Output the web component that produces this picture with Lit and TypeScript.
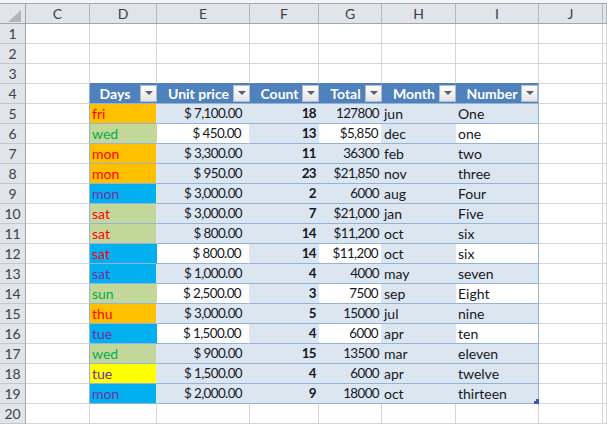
import { LitElement, html, css, nothing, TemplateResult } from 'lit';
import { customElement } from 'lit/decorators.js';

interface Row {
  day: string;
  fill: 'orange' | 'green' | 'blue' | 'yellow';
  ink: 'red' | 'lime' | 'purple';
  price: string;
  count: number;
  total: string;
  month: string;
  num: string;
  white?: boolean;
}

const COLUMNS = ['C', 'D', 'E', 'F', 'G', 'H', 'I', 'J'];
const HEADERS = ['Days', 'Unit price', 'Count', 'Total', 'Month', 'Number'];

const ROWS: Row[] = [
  { day: 'fri', fill: 'orange', ink: 'red', price: '$ 7,100.00', count: 18, total: '127800', month: 'jun', num: 'One' },
  { day: 'wed', fill: 'green', ink: 'lime', price: '$ 450.00', count: 13, total: '$5,850', month: 'dec', num: 'one', white: true },
  { day: 'mon', fill: 'orange', ink: 'red', price: '$ 3,300.00', count: 11, total: '36300', month: 'feb', num: 'two' },
  { day: 'mon', fill: 'orange', ink: 'red', price: '$ 950.00', count: 23, total: '$21,850', month: 'nov', num: 'three' },
  { day: 'mon', fill: 'blue', ink: 'purple', price: '$ 3,000.00', count: 2, total: '6000', month: 'aug', num: 'Four' },
  { day: 'sat', fill: 'green', ink: 'red', price: '$ 3,000.00', count: 7, total: '$21,000', month: 'jan', num: 'Five' },
  { day: 'sat', fill: 'green', ink: 'red', price: '$ 800.00', count: 14, total: '$11,200', month: 'oct', num: 'six' },
  { day: 'sat', fill: 'blue', ink: 'red', price: '$ 800.00', count: 14, total: '$11,200', month: 'oct', num: 'six', white: true },
  { day: 'sat', fill: 'blue', ink: 'purple', price: '$ 1,000.00', count: 4, total: '4000', month: 'may', num: 'seven' },
  { day: 'sun', fill: 'green', ink: 'lime', price: '$ 2,500.00', count: 3, total: '7500', month: 'sep', num: 'Eight', white: true },
  { day: 'thu', fill: 'orange', ink: 'red', price: '$ 3,000.00', count: 5, total: '15000', month: 'jul', num: 'nine' },
  { day: 'tue', fill: 'blue', ink: 'purple', price: '$ 1,500.00', count: 4, total: '6000', month: 'apr', num: 'ten', white: true },
  { day: 'wed', fill: 'green', ink: 'lime', price: '$ 900.00', count: 15, total: '13500', month: 'mar', num: 'eleven' },
  { day: 'tue', fill: 'yellow', ink: 'purple', price: '$ 1,500.00', count: 4, total: '6000', month: 'apr', num: 'twelve' },
  { day: 'mon', fill: 'blue', ink: 'purple', price: '$ 2,000.00', count: 9, total: '18000', month: 'oct', num: 'thirteen' },
];

@customElement('app-root')
export class AppRoot extends LitElement {
  static styles = css`
    :host {
      display: block;
      width: 607px;
      height: 424px;
      overflow: hidden;
      background: #fff;
      font-family: 'Lato', 'Liberation Sans', sans-serif;
      font-size: 14px;
      color: #14181f;
    }

    .top {
      height: 3px;
      background: #f4f5f7;
      border-bottom: 1px solid #a3a6ab;
    }

    .sheet {
      display: grid;
      grid-template-columns: 26px 64px 67px 93px 69px 63px 74px 83px 64px 1fr;
      grid-auto-rows: 20px;
    }

    .sheet > div {
      box-sizing: border-box;
      display: flex;
      align-items: center;
      white-space: nowrap;
      line-height: 1;
      border-right: 1px solid #d6d6d6;
      border-bottom: 1px solid #d6d6d6;
    }

    .sheet > .corner {
      position: relative;
      background: #e1e4e9;
      border-right: 1px solid #a3a6ab;
      border-bottom: 1px solid #a3a6ab;
    }

    .corner::after {
      content: '';
      position: absolute;
      left: 8px;
      top: 6px;
      width: 13px;
      height: 12px;
      background: #b1b6bb;
      clip-path: polygon(100% 0, 100% 100%, 0 100%);
    }

    .sheet > .col {
      justify-content: center;
      background: #e1e4e9;
      color: #3d4248;
      border-right-color: #b4b7bc;
      border-bottom-color: #a3a6ab;
    }

    .sheet > .row {
      justify-content: center;
      background: #e1e4e9;
      color: #3d4248;
      border-right-color: #a3a6ab;
      border-bottom-color: #c3c6cb;
    }

    .sheet > .before-table {
      border-right-color: #95b3d7;
    }

    .sheet > .above-table {
      border-bottom-color: #4f81bd;
    }

    .sheet > .head {
      background: #4f81bd;
      color: #fff;
      font-weight: 700;
      border-right: 0;
      border-bottom-color: #95b3d7;
    }

    .sheet > .head.last {
      border-right: 1px solid #95b3d7;
    }

    .head span {
      flex: 1;
      text-align: center;
      padding-left: 7px;
    }

    .head.first span {
      padding-left: 0;
    }

    .arrow {
      box-sizing: border-box;
      flex: none;
      width: 17px;
      height: 17px;
      margin-bottom: 1px;
      display: flex;
      align-items: center;
      justify-content: center;
      background: linear-gradient(#ffffff, #e2e4e8);
      border: 1px solid #b4bcc8;
    }

    .arrow::before {
      content: '';
      border-left: 4px solid transparent;
      border-right: 4px solid transparent;
      border-top: 4px solid #5a5f66;
    }

    .sheet > .cell {
      background: #dce6f1;
      border-right: 0;
      border-bottom-color: #95b3d7;
    }

    .sheet > .cell.open {
      box-sizing: border-box;
      background: #fff;
      border-right: 1px solid #dce6f1;
    }

    .sheet > .cell.end {
      border-right: 1px solid #95b3d7;
    }

    .sheet > .cell.open.end {
      border-right-color: #95b3d7;
    }

    .sheet > .day {
      padding-left: 2px;
      border-right: 1px solid #dce6f1;
    }

    .sheet > .day.over {
      border-right-color: transparent;
    }

    .sheet > .day.orange { background: #ffc000; }
    .sheet > .day.green { background: #c4d79b; }
    .sheet > .day.blue { background: #00b0f0; }
    .sheet > .day.yellow { background: #ffff00; }
    .day.red { color: #ff0000; }
    .day.lime { color: #00b050; }
    .day.purple { color: #7030a0; }

    .price,
    .count,
    .total {
      justify-content: flex-end;
      font-size: 13.4px;
      letter-spacing: -0.6px;
    }

    .price {
      padding-right: 8px;
    }

    .count {
      padding-right: 3px;
      font-weight: 700;
    }

    .total {
      padding-right: 3px;
    }

    .text {
      padding-left: 2px;
    }

    .sheet > .handle-cell {
      position: relative;
    }

    .handle {
      position: absolute;
      right: -1px;
      bottom: -1px;
      width: 5px;
      height: 5px;
      background: #4355b4;
      clip-path: polygon(100% 0, 100% 100%, 0 100%, 0 40%, 40% 40%, 40% 0);
    }
  `;

  private blankRow(n: number, aboveTable: boolean): TemplateResult {
    return html`
      <div class="row">${n}</div>
      <div></div>
      ${HEADERS.map(() => html`<div class=${aboveTable ? 'above-table' : ''}></div>`)}
      <div></div>
      <div></div>
    `;
  }

  private dataRow(r: Row, index: number): TemplateResult {
    const open = r.white ? 'open' : '';
    const last = index === ROWS.length - 1;
    return html`
      <div class="row">${index + 5}</div>
      <div class="before-table"></div>
      <div class="cell day text ${r.fill} ${r.ink} ${r.white ? 'over' : ''}">${r.day}</div>
      <div class="cell price ${open}">${r.price}</div>
      <div class="cell count">${r.count}</div>
      <div class="cell total ${open}">${r.total}</div>
      <div class="cell text">${r.month}</div>
      <div class="cell text end ${open} ${last ? 'handle-cell' : ''}">
        ${r.num}${last ? html`<i class="handle"></i>` : nothing}
      </div>
      <div></div>
      <div></div>
    `;
  }

  render(): TemplateResult {
    return html`
      <div class="top"></div>
      <div class="sheet">
        <div class="corner"></div>
        ${COLUMNS.map((c) => html`<div class="col">${c}</div>`)}
        <div class="col"></div>

        ${[1, 2].map((n) => this.blankRow(n, false))}
        ${this.blankRow(3, true)}

        <div class="row">4</div>
        <div class="before-table"></div>
        ${HEADERS.map(
          (h, i) => html`
            <div class="head ${i === 0 ? 'first' : ''} ${i === HEADERS.length - 1 ? 'last' : ''}">
              <span>${h}</span><b class="arrow"></b>
            </div>
          `
        )}
        <div></div>
        <div></div>

        ${ROWS.map((r, i) => this.dataRow(r, i))}

        ${this.blankRow(20, false)}
      </div>
    `;
  }
}
